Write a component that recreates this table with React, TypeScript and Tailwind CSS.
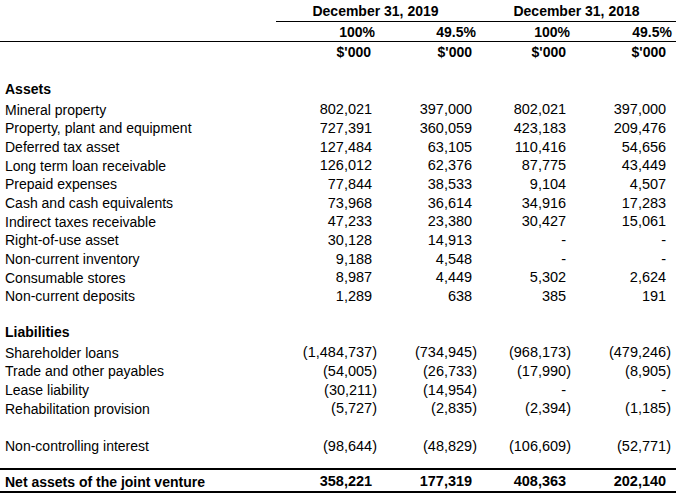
import React from 'react';

type Row = { label: string; values: string[] };

const assets: Row[] = [
  { label: 'Mineral property', values: ['802,021', '397,000', '802,021', '397,000'] },
  { label: 'Property, plant and equipment', values: ['727,391', '360,059', '423,183', '209,476'] },
  { label: 'Deferred tax asset', values: ['127,484', '63,105', '110,416', '54,656'] },
  { label: 'Long term loan receivable', values: ['126,012', '62,376', '87,775', '43,449'] },
  { label: 'Prepaid expenses', values: ['77,844', '38,533', '9,104', '4,507'] },
  { label: 'Cash and cash equivalents', values: ['73,968', '36,614', '34,916', '17,283'] },
  { label: 'Indirect taxes receivable', values: ['47,233', '23,380', '30,427', '15,061'] },
  { label: 'Right-of-use asset', values: ['30,128', '14,913', '-', '-'] },
  { label: 'Non-current inventory', values: ['9,188', '4,548', '-', '-'] },
  { label: 'Consumable stores', values: ['8,987', '4,449', '5,302', '2,624'] },
  { label: 'Non-current deposits', values: ['1,289', '638', '385', '191'] },
];

const liabilities: Row[] = [
  { label: 'Shareholder loans', values: ['(1,484,737)', '(734,945)', '(968,173)', '(479,246)'] },
  { label: 'Trade and other payables', values: ['(54,005)', '(26,733)', '(17,990)', '(8,905)'] },
  { label: 'Lease liability', values: ['(30,211)', '(14,954)', '-', '-'] },
  { label: 'Rehabilitation provision', values: ['(5,727)', '(2,835)', '(2,394)', '(1,185)'] },
];

const grid = 'grid grid-cols-[276px_101px_100px_99px_100px]';
const pads = ['pr-0', 'pr-0', 'pr-[5px]', 'pr-[5px]'];

function Num({ value }: { value: string }) {
  const neg = value.startsWith('(');
  return (
    <>
      {value}
      {!neg && <span className="invisible">)</span>}
    </>
  );
}

function DataRow({ row }: { row: Row }) {
  return (
    <div className={`${grid} h-[18.7px] items-center`}>
      <div className="pl-[5px] whitespace-nowrap">{row.label}</div>
      {row.values.map((v, i) => (
        <div key={i} className={`text-right text-[14.5px] whitespace-nowrap ${pads[i]}`}>
          <Num value={v} />
        </div>
      ))}
    </div>
  );
}

function SectionTitle({ children }: { children: React.ReactNode }) {
  return (
    <div className="h-[18.7px] flex items-center pl-[5px] font-bold">{children}</div>
  );
}

export default function App() {
  return (
    <div className="w-[676px] h-[496px] bg-white text-black text-[14px] font-['Liberation_Sans',Arial,sans-serif] overflow-hidden">
      <div className={`${grid} h-[22px]`}>
        <div />
        <div className="col-span-2 border-b border-black text-center font-bold pt-[2px] leading-[19px] pr-[2px]">
          December 31, 2019
        </div>
        <div className="col-span-2 border-b border-black text-center font-bold pt-[2px] leading-[19px]">
          December 31, 2018
        </div>
      </div>
      <div className={`${grid} h-[20px] border-b border-black items-center font-bold`}>
        <div />
        <div className="text-right pr-[2px]">100%</div>
        <div className="text-right pr-[1px]">49.5%</div>
        <div className="text-right pr-[6px]">100%</div>
        <div className="text-right pr-[4px]">49.5%</div>
      </div>
      <div className={`${grid} h-[19px] items-center font-bold`}>
        <div />
        <div className="text-right pr-[6px]">$'000</div>
        <div className="text-right pr-[5px]">$'000</div>
        <div className="text-right pr-[10px]">$'000</div>
        <div className="text-right pr-[10px]">$'000</div>
      </div>
      <div className="h-[19.5px]" />

      <SectionTitle>Assets</SectionTitle>
      {assets.map((r) => (
        <DataRow key={r.label} row={r} />
      ))}
      <div className="h-[18.7px]" />

      <SectionTitle>Liabilities</SectionTitle>
      {liabilities.map((r) => (
        <DataRow key={r.label} row={r} />
      ))}
      <div className="h-[18.7px]" />

      <DataRow row={{ label: 'Non-controlling interest', values: ['(98,644)', '(48,829)', '(106,609)', '(52,771)'] }} />
      <div className="h-[14px]" />

      <div className={`${grid} h-[25px] border-y-2 border-black items-center font-bold pt-[1px]`}>
        <div className="pl-[5px] whitespace-nowrap">Net assets of the joint venture</div>
        {['358,221', '177,319', '408,363', '202,140'].map((v, i) => (
          <div key={i} className={`text-right text-[14.5px] ${pads[i]}`}>
            <Num value={v} />
          </div>
        ))}
      </div>
    </div>
  );
}
